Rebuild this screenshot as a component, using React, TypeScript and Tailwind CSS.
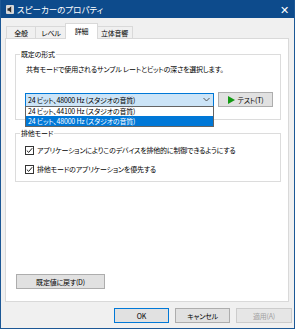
import React from 'react'

const FONT = "font-['Noto_Sans_CJK_JP','Noto_Sans',sans-serif] [font-feature-settings:'palt']"

function CheckRow({ label }: { label: string }) {
  return (
    <div className="flex items-center h-[12px]">
      <span className="w-[9px] h-[9px] border border-[#333333] bg-white flex items-center justify-center">
        <svg width="7" height="7" viewBox="0 0 7 7">
          <path d="M0.8 3.6 L2.7 5.4 L6.2 1.2" fill="none" stroke="#222222" strokeWidth="1" />
        </svg>
      </span>
      <span className="ml-[3px] whitespace-nowrap">{label}</span>
    </div>
  )
}

function Btn({ label, className = '' }: { label: string; className?: string }) {
  return (
    <div
      className={`h-[15px] flex items-center justify-center border border-[#adadad] bg-[#e1e1e1] ${className}`}
    >
      {label}
    </div>
  )
}

export default function App() {
  const tabs = ['全般', 'レベル', '詳細', '立体音響']

  return (
    <div
      className={`w-[295px] h-[329px] bg-[#f0f0f0] border-x border-b border-[#1c5896] flex flex-col text-[7px] tracking-[-0.2px] leading-[12px] text-black whitespace-nowrap ${FONT}`}
    >
      {/* title bar */}
      <div className="h-[18px] bg-[#0d4b8c] flex items-center pl-[5px] pr-[5px] shrink-0">
        <svg width="8" height="9" viewBox="0 0 8 9">
          <rect x="0" y="0" width="8" height="9" rx="1" fill="#d8d8d8" />
          <path d="M1.5 3.2 H3 L5.2 1.3 V7.7 L3 5.8 H1.5 Z" fill="#2a2a2a" />
        </svg>
        <span className="ml-[3px] text-white text-[8.5px] tracking-normal">スピーカーのプロパティ</span>
        <span className="ml-auto text-white text-[11px] leading-none">✕</span>
      </div>

      {/* tabs */}
      <div className="h-[20px] flex items-end pl-[5px] shrink-0">
        {tabs.map((t) =>
          t === '詳細' ? (
            <div
              key={t}
              className="relative z-10 -mb-px -mx-[2px] w-[33px] h-[16px] bg-white border border-b-0 border-[#d9d9d9] flex items-start justify-center pt-[1px]"
            >
              {t}
            </div>
          ) : (
            <div
              key={t}
              className={`h-[12px] border border-b-0 border-[#d9d9d9] bg-[#f0f0f0] flex items-center justify-center ${
                t === '立体音響' ? 'w-[37px]' : t === 'レベル' ? 'w-[31px] border-l-0' : 'w-[30px]'
              }`}
            >
              {t}
            </div>
          )
        )}
      </div>

      {/* panel */}
      <div className="h-[264px] ml-[4px] mr-[5px] bg-white border border-[#d9d9d9] flex flex-col shrink-0">
        <fieldset className="mt-[9px] ml-[9px] w-[266px] border border-[#dcdcdc]">
          <legend className="ml-[4px] px-[1px] leading-[12px]">既定の形式</legend>
          <div className="pl-[9px] pb-[12px]">
            <div className="pl-[1px] mt-[3px] h-[12px]">
              共有モードで使用されるサンプル レートとビットの深さを選択します。
            </div>
            <div className="mt-[17px] flex items-center">
              <div className="relative w-[189px] h-[14px] border border-[#0078d7] bg-[#cce4f7] flex items-center pl-[2px]">
                <span>24 ビット、48000 Hz (スタジオの音質)</span>
                <svg className="ml-auto mr-[3px]" width="7" height="5" viewBox="0 0 7 5">
                  <path d="M0.5 1 L3.5 4 L6.5 1" fill="none" stroke="#555555" strokeWidth="1" />
                </svg>
                <div className="absolute left-[-1px] top-full w-[189px] border border-[#646464] bg-white z-20 leading-[10px]">
                  <div className="h-[9px] flex items-center pl-[2px]">24 ビット、44100 Hz (スタジオの音質)</div>
                  <div className="h-[10px] flex items-center pl-[2px] bg-[#0078d7] text-white">
                    24 ビット、48000 Hz (スタジオの音質)
                  </div>
                </div>
              </div>
              <div className="ml-[4px] w-[55px] h-[15px] border border-[#adadad] bg-[#e1e1e1] flex items-center justify-center">
                <svg width="7" height="8" viewBox="0 0 7 8">
                  <path d="M0 0 L7 4 L0 8 Z" fill="#139a13" />
                </svg>
                <span className="ml-[3px]">テスト(T)</span>
              </div>
            </div>
          </div>
        </fieldset>

        <fieldset className="mt-[7px] ml-[9px] w-[266px] border border-[#dcdcdc]">
          <legend className="ml-[4px] px-[1px] leading-[12px]">排他モード</legend>
          <div className="pl-[9px] pt-[5px] pb-[6px] flex flex-col gap-[7px]">
            <CheckRow label="アプリケーションによりこのデバイスを排他的に制御できるようにする" />
            <CheckRow label="排他モードのアプリケーションを優先する" />
          </div>
        </fieldset>

        <Btn label="既定値に戻す(D)" className="mt-auto mb-[12px] ml-[10px] w-[89px]" />
      </div>

      {/* bottom buttons */}
      <div className="mt-[6px] flex justify-end gap-[6px] pr-[2px]">
        <Btn label="OK" className="w-[55px] !border-[#0078d7]" />
        <Btn label="キャンセル" className="w-[55px]" />
        <div className="w-[56px] h-[15px] flex items-center justify-center border border-[#cccccc] bg-[#e6e6e6] text-[#a0a0a0]">
          適用(A)
        </div>
      </div>
    </div>
  )
}
